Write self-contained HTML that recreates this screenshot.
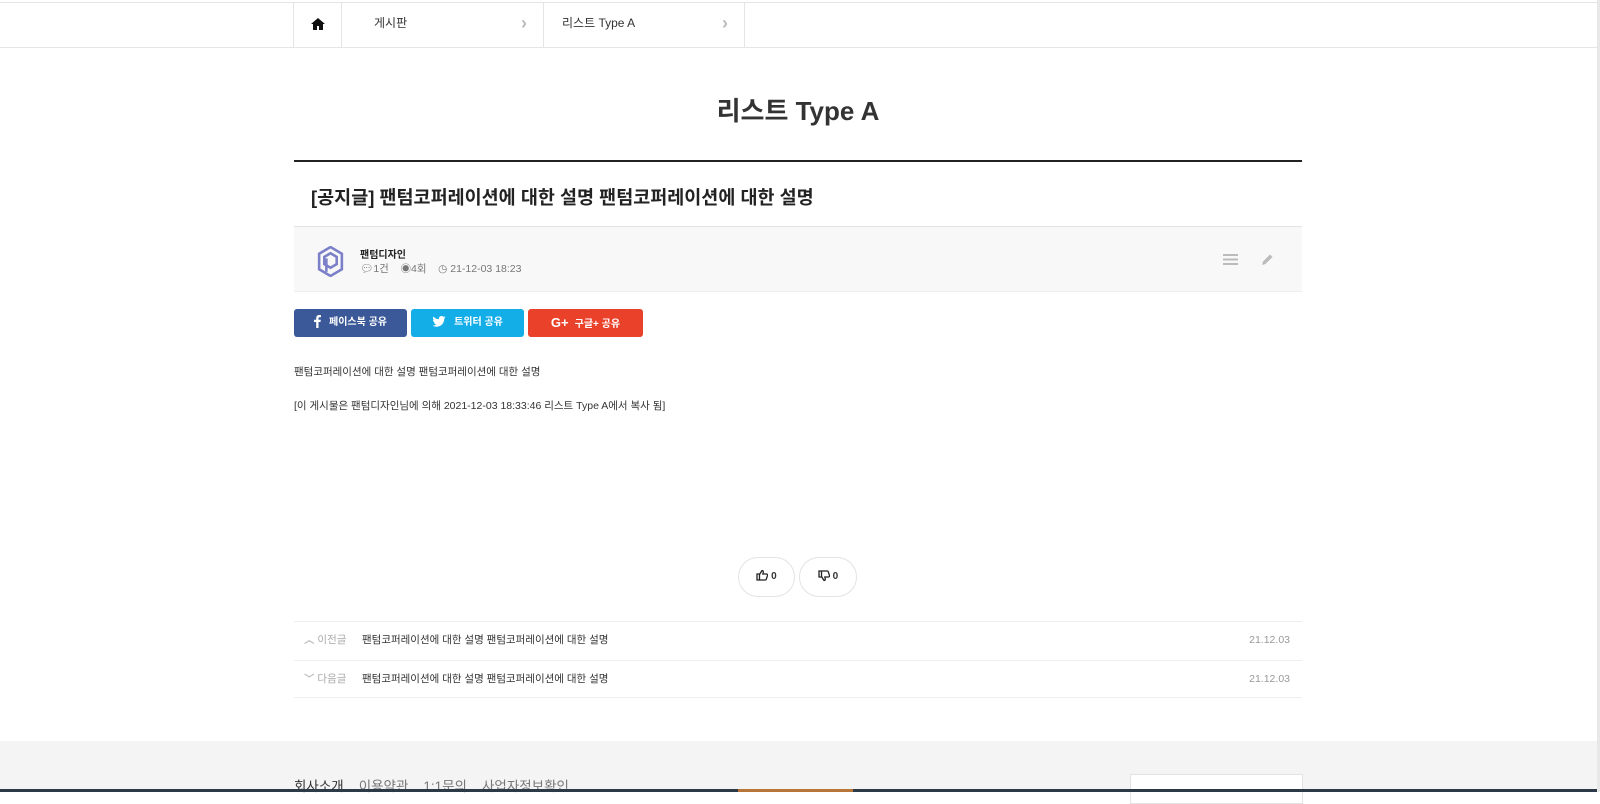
<!DOCTYPE html>
<html><head><meta charset="utf-8"><style>
*{margin:0;padding:0;box-sizing:border-box}
body{width:1600px;height:792px;overflow:hidden;background:#fff;font-family:"Liberation Sans","Noto Sans CJK KR",sans-serif;color:#333;position:relative}
.abs{position:absolute}
.bc{top:2px;left:0;width:1597px;height:46px;border-top:1px solid #e5e5e5;border-bottom:1px solid #e5e5e5}
.cell{position:absolute;top:0;height:44px;border-left:1px solid #e5e5e5;font-size:12px;line-height:41px;color:#333}
.chev{position:absolute;right:16px;top:0;color:#bbb;font-size:18px;font-weight:bold}
.btn{position:absolute;top:309px;height:28px;border-radius:3px;color:#fff;font-size:10px;line-height:28px;text-align:center;font-weight:bold}
.btn svg{vertical-align:middle;margin-right:8px;margin-top:-2px}
.row{position:absolute;left:294px;width:1008px;height:38px;border-top:1px solid #eee;font-size:10.5px;line-height:37px}
</style></head><body>
<div class="abs bc">
  <div class="cell" style="left:293px;width:48px;text-align:center">
    <svg width="14" height="12" viewBox="0 0 14 12" style="margin-top:15px"><path d="M7 0L0 6h2v6h4V8h2v4h4V6h2z" fill="#111"/></svg></div>
  <div class="cell" style="left:341px;width:202px;padding-left:32px">게시판<span class="chev">&#x203A;</span></div>
  <div class="cell" style="left:543px;width:202px;padding-left:18px;border-right:1px solid #e5e5e5">리스트 Type A<span class="chev">&#x203A;</span></div>
</div>
<div class="abs" style="top:91px;left:0;width:1596px;text-align:center;font-size:26px;font-weight:bold;color:#333">리스트 Type A</div>
<div class="abs" style="top:160px;left:294px;width:1008px;height:2px;background:#222"></div>
<div class="abs" style="top:184px;left:311px;font-size:18.5px;font-weight:bold;color:#222">[공지글] 팬텀코퍼레이션에 대한 설명 팬텀코퍼레이션에 대한 설명</div>
<div class="abs" style="top:226px;left:294px;width:1008px;height:66px;background:#f8f8f8;border-top:1px solid #e3e3e3;border-bottom:1px solid #eee"></div>
<svg class="abs" style="left:317px;top:246px" width="27" height="31" viewBox="0 0 26 30"><path d="M13 1L24 7.5v15L13 29 2 22.5v-15z" fill="none" stroke="#7b80c8" stroke-width="2.5"/><path d="M13 7l6 3.5v7L13 21l-6-3.5v-7z" fill="none" stroke="#7b80c8" stroke-width="2.5"/><path d="M9 25V12" stroke="#7b80c8" stroke-width="2.5"/></svg>
<div class="abs" style="top:246px;left:360px;font-size:10px;font-weight:bold;color:#222">팬텀디자인</div>
<div class="abs" style="top:261px;left:360px;font-size:10.5px;color:#777">💬︎1건 &nbsp;&nbsp; ◉4회 &nbsp;&nbsp; ◷ 21-12-03 18:23</div>
<div class="abs" style="left:1223px;top:254px;width:15px;height:11px;background:repeating-linear-gradient(#bbb 0 2px,transparent 2px 4.5px)"></div>
<svg class="abs" style="left:1261px;top:253px" width="13" height="13" viewBox="0 0 13 13"><path d="M1 12l1-3.5 7-7 2.5 2.5-7 7z" fill="#bbb"/></svg>
<div class="btn" style="left:294px;width:113px;background:#3b5998"><svg width="7" height="13" viewBox="0 0 7 13"><path d="M4.5 13V7h2l.3-2.3H4.5V3.3c0-.7.2-1.1 1.1-1.1H7V.1C6.7.1 6 0 5.2 0 3.4 0 2.2 1.1 2.2 3.1v1.6H0V7h2.2v6z" fill="#fff"/></svg>페이스북 공유</div>
<div class="btn" style="left:411px;width:113px;background:#13aee8"><svg width="14" height="11" viewBox="0 0 24 20"><path d="M24 2.4c-.9.4-1.8.7-2.8.8 1-.6 1.8-1.6 2.2-2.7-1 .6-2 1-3.1 1.2C19.4.7 18.1 0 16.6 0c-2.7 0-4.9 2.2-4.9 4.9 0 .4 0 .8.1 1.100C7.7 5.8 4.1 3.9 1.7.9c-.4.7-.7 1.6-.7 2.5 0 1.7.9 3.2 2.2 4.1-.8 0-1.600-.2-2.2-.6v.1c0 2.4 1.7 4.4 3.9 4.8-.4.1-.8.2-1.3.2-.3 0-.6 0-.9-.1.6 2 2.4 3.4 4.6 3.4-1.7 1.3-3.8 2.1-6.1 2.1-.4 0-.8 0-1.2-.1 2.2 1.4 4.8 2.2 7.5 2.2 9.1 0 14-7.5 14-14v-.6c1-.7 1.8-1.6 2.4-2.5z" fill="#fff"/></svg>트위터 공유</div>
<div class="btn" style="left:528px;width:115px;background:#e9412a"><span style="font-size:13px;margin-right:6px">G+</span>구글+ 공유</div>
<div class="abs" style="top:364px;left:294px;font-size:10.5px;color:#333">팬텀코퍼레이션에 대한 설명 팬텀코퍼레이션에 대한 설명</div>
<div class="abs" style="top:398px;left:294px;font-size:10.5px;color:#333">[이 게시물은 팬텀디자인님에 의해 2021-12-03 18:33:46 리스트 Type A에서 복사 됨]</div>
<div class="abs" style="left:738px;top:557px;width:57px;height:40px;border:1px solid #e3e3e3;border-radius:20px;text-align:center;line-height:38px;font-size:10px;font-weight:bold"><svg width="12" height="12" viewBox="0 0 12 12" style="vertical-align:middle;margin-top:-3px"><path d="M1 5h2.5v6H1zM3.5 5.5L6 1.5c1 0 1.5.7 1.2 2L6.8 5H10.5c.8 0 1.2.7 1 1.4l-1.2 3.8c-.2.5-.6.8-1.1.8H3.5" fill="none" stroke="#222" stroke-width="1.3"/></svg> 0</div>
<div class="abs" style="left:799px;top:557px;width:58px;height:40px;border:1px solid #e3e3e3;border-radius:20px;text-align:center;line-height:38px;font-size:10px;font-weight:bold"><svg width="12" height="12" viewBox="0 0 12 12" style="vertical-align:middle;margin-top:-1px"><g transform="matrix(1 0 0 -1 0 12)"><path d="M1 5h2.5v6H1zM3.5 5.5L6 1.5c1 0 1.5.7 1.2 2L6.8 5H10.5c.8 0 1.2.7 1 1.4l-1.2 3.8c-.2.5-.6.8-1.1.8H3.5" fill="none" stroke="#222" stroke-width="1.3"/></g></svg> 0</div>
<div class="row" style="top:621px"><span style="position:absolute;left:10px;color:#aaa"><b style="color:#bbb">︿</b> 이전글</span><span style="position:absolute;left:68px;color:#333">팬텀코퍼레이션에 대한 설명 팬텀코퍼레이션에 대한 설명</span><span style="position:absolute;right:12px;color:#999">21.12.03</span></div>
<div class="row" style="top:660px;border-bottom:1px solid #eee"><span style="position:absolute;left:10px;color:#aaa"><b style="color:#bbb">﹀</b> 다음글</span><span style="position:absolute;left:68px;color:#333">팬텀코퍼레이션에 대한 설명 팬텀코퍼레이션에 대한 설명</span><span style="position:absolute;right:12px;color:#999">21.12.03</span></div>
<div class="abs" style="top:741px;left:0;width:1597px;height:51px;background:#f4f4f4"></div>
<div class="abs" style="top:775px;left:294px;font-size:13.5px;color:#777;white-space:nowrap"><span style="color:#333">회사소개</span> &nbsp;&nbsp; 이용약관 &nbsp;&nbsp; 1:1문의 &nbsp;&nbsp; 사업자정보확인</div>
<div class="abs" style="top:774px;left:1130px;width:173px;height:30px;background:#fff;border:1px solid #e3e3e3"></div>
<div class="abs" style="top:789px;left:0;width:1597px;height:3px;background:#2c3a47"></div>
<div class="abs" style="top:789px;left:738px;width:115px;height:3px;background:#b8753a"></div>
<div class="abs" style="top:0;left:1597px;width:3px;height:792px;background:#e8e8e8"></div>
</body></html>
